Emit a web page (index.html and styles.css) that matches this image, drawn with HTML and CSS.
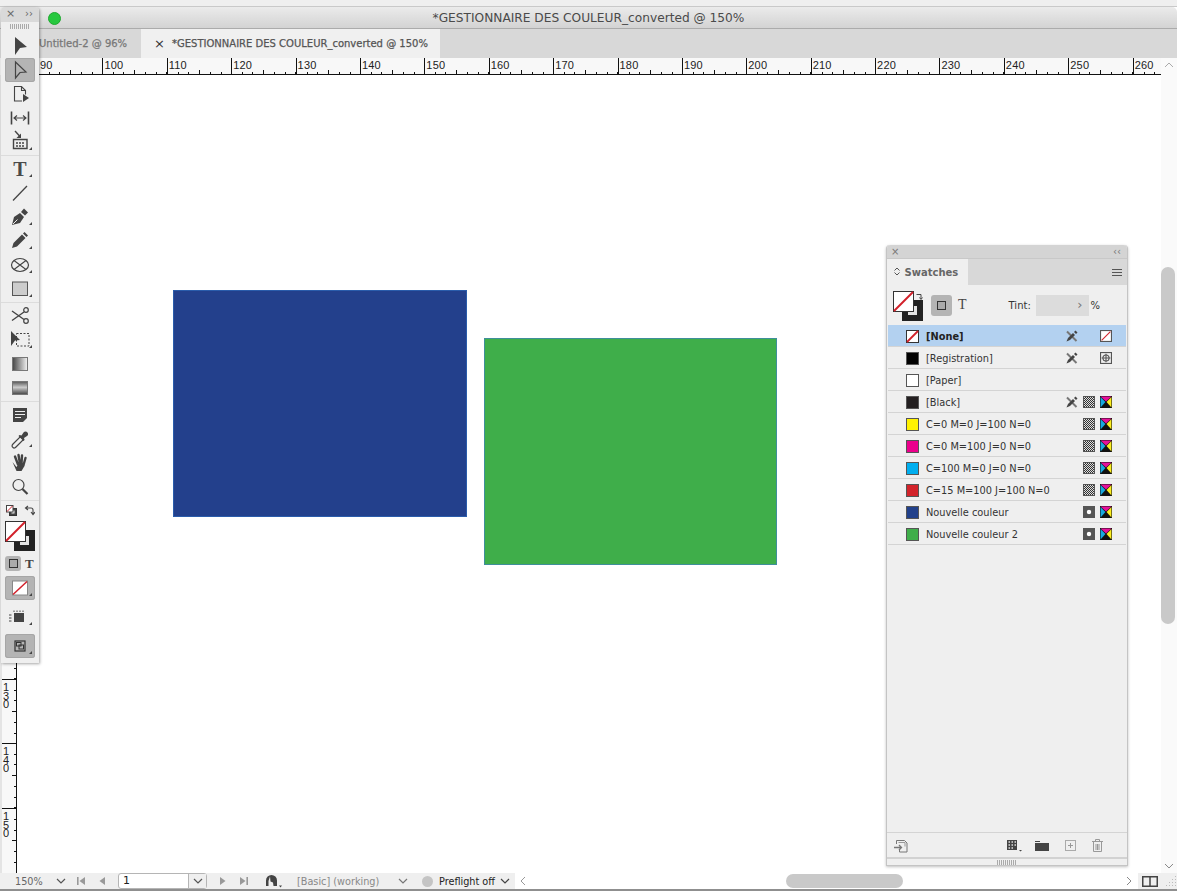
FILE: index.html
```html
<!DOCTYPE html>
<html lang="fr">
<head>
    <meta charset="UTF-8">
    <meta name="viewport" content="width=device-width, initial-scale=1.0">
    <title>GESTIONNAIRE DES COULEUR</title>
    <link rel="stylesheet" href="styles.css">
</head>
<body>
<svg class="defs" width="0" height="0">
    <defs>
        <linearGradient id="gradTool"><stop offset="0" stop-color="#444"/><stop offset="1" stop-color="#f4f4f4"/></linearGradient>
        <linearGradient id="featherTool" x2="0" y2="1"><stop offset="0" stop-color="#555"/><stop offset=".45" stop-color="#ccc"/><stop offset="1" stop-color="#444"/></linearGradient>
        <symbol id="corner" viewBox="0 0 30 24"><polygon points="27,17 27,20 24,20" fill="#444"/></symbol>
        <symbol id="cmyk" viewBox="0 0 11 11">
            <rect width="11" height="11" fill="#111"/>
            <polygon points=".5,.5 10.500,.5 5.500,5" fill="#e6109a"/>
            <polygon points=".5,1 .5,10.500 5,5.500" fill="#18a8e0"/>
            <polygon points="10.500,1 10.500,10.500 6,5.500" fill="#fdee20"/>
        </symbol>
        <symbol id="nopen" viewBox="0 0 12 12">
            <path d="M1 1.500l9.500 9.500" stroke="#777" stroke-width="2" fill="none"/>
            <path d="M.5 11.500L2 8l5-5 2 2-5 5z" fill="#444"/>
            <path d="M8 2l1.500-1.500 2 2L10 4z" fill="#444"/>
        </symbol>
        <symbol id="fillstroke" viewBox="0 0 31 30">
            <rect x="9" y="9" width="21" height="21" fill="#222"/>
            <rect x="15" y="15" width="9" height="9" fill="#e4e4e4"/>
            <rect x=".5" y=".5" width="20" height="20" fill="#fff" stroke="#333"/>
            <path d="M1 20L20 1" stroke="#d2202a" stroke-width="2"/>
        </symbol>
    </defs>
</svg>

<div class="window">
    <div class="top-strip"></div>
    <div class="titlebar">
        <span class="light"></span>
        <span class="title">*GESTIONNAIRE DES COULEUR_converted @ 150%</span>
    </div>
    <div class="tabs">
        <div class="tab first">Untitled-2 @ 96%</div>
        <div class="tab active"><span class="tab-x">×</span>*GESTIONNAIRE DES COULEUR_converted @ 150%</div>
    </div>

    <div class="workspace">
        <div class="ruler-corner"></div>
        <div class="ruler-h">
            <span>90</span><span>100</span><span>110</span><span>120</span><span>130</span><span>140</span>
            <span>150</span><span>160</span><span>170</span><span>180</span><span>190</span><span>200</span>
            <span>210</span><span>220</span><span>230</span><span>240</span><span>250</span><span>260</span>
        </div>
        <div class="scroll-v">
            <svg width="12" height="8" viewBox="0 0 12 8"><path d="M2 6l4-4 4 4" fill="none" stroke="#aaa"/></svg>
            <div class="thumb-v"></div>
            <svg width="12" height="8" viewBox="0 0 12 8"><path d="M2 2l4 4 4-4" fill="none" stroke="#888"/></svg>
        </div>
        <div class="ruler-v">
            <span><b>40</b></span><span><b>50</b></span><span><b>60</b></span><span><b>70</b></span><span><b>80</b></span>
            <span><b>90</b></span><span><b>100</b></span><span><b>110</b></span><span><b>120</b></span>
            <span><b>130</b></span><span><b>140</b></span><span><b>150</b></span>
        </div>
        <div class="canvas">
            <div class="shape blue"></div>
            <div class="shape green"></div>
        </div>
    </div>

    <div class="status">
        <span class="zoom-val">150%</span>
        <svg class="chev" width="10" height="6" viewBox="0 0 10 6"><path d="M1 1l4 4 4-4" fill="none" stroke="#555" stroke-width="1.2"/></svg>
        <svg class="nav first-nav" width="10" height="10" viewBox="0 0 10 10"><path d="M1 1h1.600v8H1zM9 1v8L3.500 5z" fill="#999"/></svg>
        <svg class="nav prev-nav" width="8" height="10" viewBox="0 0 8 10"><path d="M7 1v8L1.500 5z" fill="#999"/></svg>
        <div class="page-box"><span class="page-num">1</span><span class="page-drop"><svg width="10" height="6" viewBox="0 0 10 6"><path d="M1 1l4 4 4-4" fill="none" stroke="#555" stroke-width="1.2"/></svg></span></div>
        <svg class="nav next-nav" width="8" height="10" viewBox="0 0 8 10"><path d="M1 1v8L6.500 5z" fill="#999"/></svg>
        <svg class="nav last-nav" width="10" height="10" viewBox="0 0 10 10"><path d="M1 1v8L6.500 5zM7.400 1H9v8H7.400z" fill="#999"/></svg>
        <svg class="clock" width="17" height="14" viewBox="0 0 17 14"><path d="M1 12V6.500a5.500 5.500 0 0 1 11 0V12H8.500l-.5-3.500-2.500-1L5 2.500 3.500 7 3.500 12z" fill="#444"/><path d="M14 11.500h3L15.500 13.500z" fill="#444"/></svg>
        <span class="profile">[Basic] (working)</span>
        <svg class="chev profile-chev" width="10" height="6" viewBox="0 0 10 6"><path d="M1 1l4 4 4-4" fill="none" stroke="#777" stroke-width="1.2"/></svg>
        <span class="dot"></span>
        <span class="preflight">Preflight off</span>
        <svg class="chev preflight-chev" width="10" height="6" viewBox="0 0 10 6"><path d="M1 1l4 4 4-4" fill="none" stroke="#444" stroke-width="1.2"/></svg>
        <div class="scroll-h">
            <svg width="8" height="12" viewBox="0 0 8 12"><path d="M6 2L2 6l4 4" fill="none" stroke="#999"/></svg>
            <div class="thumb-h"></div>
            <svg class="right-arrow" width="8" height="12" viewBox="0 0 8 12"><path d="M2 2l4 4-4 4" fill="none" stroke="#888"/></svg>
        </div>
        <div class="status-end">
            <svg width="16" height="11" viewBox="0 0 16 11"><path d="M.75.75h14.500v9.500H.75zM8 .75v9.500" fill="none" stroke="#444" stroke-width="1.500"/></svg>
            <svg class="resize" width="12" height="12" viewBox="0 0 12 12"><path d="M10 1h1v1h-1zM7 4h1v1H7zM10 4h1v1h-1zM4 7h1v1H4zM7 7h1v1H7zM10 7h1v1h-1zM1 10h1v1H1zM4 10h1v1H4zM7 10h1v1H7zM10 10h1v1h-1z" fill="#bbb"/></svg>
        </div>
    </div>

    <!-- barre d'outils flottante -->
    <div class="toolbar">
        <div class="tb-head"><span>×</span><span class="tb-collapse">››</span></div>
        <div class="grip"></div>
        <div class="tool-group">
            <div class="tool"><svg viewBox="0 0 30 24"><polygon points="10,3 22,13 15,14 10,21" fill="#444"/></svg></div>
            <div class="tool on"><svg viewBox="0 0 30 24"><polygon points="10.500,4 21,14 15,14.500 10.500,20" fill="none" stroke="#444" stroke-width="1.200"/></svg></div>
            <div class="tool"><svg viewBox="0 0 30 24"><path d="M17 19H9.500V4.500h7l4 4v4M16.500 4.500v4h4" fill="none" stroke="#444" stroke-width="1.100"/><polygon points="18,12 24,16 18,20" fill="#444"/></svg></div>
            <div class="tool"><svg viewBox="0 0 30 24"><path d="M6.500 5.500v13M23.500 5.500v13" stroke="#444" stroke-width="1.600"/><path d="M9 12h12M12 9.500L9 12l3 2.500M18 9.500l3 2.500-3 2.500" fill="none" stroke="#444" stroke-width="1.100"/></svg></div>
            <div class="tool"><svg viewBox="0 0 30 24"><path d="M8.500 9.500h13.500v9H8.500z" fill="#eee" stroke="#444" stroke-width="1.400"/><path d="M11 13h2M14 13h2M17 13h2M11 16h2M14 16h2M17 16h2" stroke="#444" stroke-width="1.500"/><path d="M10 1l5 5.500" stroke="#444" stroke-width="1.400"/><polygon points="16,8 16,3.500 11.500,8" fill="#444"/><use href="#corner" width="30" height="24"/></svg></div>
        </div>
        <div class="tool-group">
            <div class="tool"><svg viewBox="0 0 30 24"><text x="15" y="19" text-anchor="middle" class="tool-t">T</text><use href="#corner" width="30" height="24"/></svg></div>
            <div class="tool"><svg viewBox="0 0 30 24"><path d="M8 19.500L22 5" stroke="#444" stroke-width="1.300"/></svg></div>
            <div class="tool"><svg viewBox="0 0 30 24"><path d="M7 20l2-8 6-4 4 4-4 6z" fill="#444"/><path d="M16 7l3-3.500 4 4-3 3z" fill="#444"/><path d="M8 19l4.500-4.500" stroke="#eee"/><use href="#corner" width="30" height="24"/></svg></div>
            <div class="tool"><svg viewBox="0 0 30 24"><path d="M7 19l1.500-5L17 5.500l3.500 3.500-8.500 8.500z" fill="#444"/><path d="M18 4.500l1.500-1.500 3.500 3.500-1.500 1.500z" fill="#444"/><use href="#corner" width="30" height="24"/></svg></div>
            <div class="tool"><svg viewBox="0 0 30 24"><ellipse cx="15" cy="12" rx="8.500" ry="6.500" fill="none" stroke="#444" stroke-width="1.200"/><path d="M9 7.500l12 9M21 7.500l-12 9" stroke="#444" stroke-width="1.100"/><use href="#corner" width="30" height="24"/></svg></div>
            <div class="tool"><svg viewBox="0 0 30 24"><rect x="7.500" y="5" width="15" height="13.500" fill="#ccc" stroke="#555"/><use href="#corner" width="30" height="24"/></svg></div>
        </div>
        <div class="tool-group">
            <div class="tool"><svg viewBox="0 0 30 24"><circle cx="21" cy="6" r="2.300" fill="none" stroke="#444" stroke-width="1.200"/><circle cx="21" cy="17" r="2.300" fill="none" stroke="#444" stroke-width="1.200"/><path d="M7 7l12 8.500M7 16.500L19 8" stroke="#444" stroke-width="1.400"/></svg></div>
            <div class="tool"><svg viewBox="0 0 30 24"><rect x="11.500" y="5.500" width="12.500" height="12.500" fill="none" stroke="#444" stroke-dasharray="2 1.500"/><polygon points="6,3 15,12 10,12.500 6,18" fill="#444"/><use href="#corner" width="30" height="24"/></svg></div>
            <div class="tool"><svg viewBox="0 0 30 24"><rect x="7.500" y="5.500" width="15" height="13" fill="url(#gradTool)" stroke="#777"/></svg></div>
            <div class="tool"><svg viewBox="0 0 30 24"><rect x="7.500" y="5.500" width="15" height="13" fill="url(#featherTool)" stroke="#777"/></svg></div>
        </div>
        <div class="tool-group">
            <div class="tool"><svg viewBox="0 0 30 24"><path d="M8 5h14v10l-4 4H8z" fill="#444"/><path d="M10 8.500h10M10 11.500h10M10 14.500h6" stroke="#eee" stroke-width="1.200"/></svg></div>
            <div class="tool"><svg viewBox="0 0 30 24"><path d="M8 20.500c-1.500-1-1-2.500 0-3.500l7.500-7.500 3 3L11 20c-1 1-2 1.500-3 .5z" fill="none" stroke="#444" stroke-width="1.200"/><path d="M14.500 8l2 .5 2-3c1-1.500 3-1.500 4 0s.5 3-.5 3.500l-3 2 .5 2-1 1-5-5z" fill="#444"/><use href="#corner" width="30" height="24"/></svg></div>
            <div class="tool"><svg viewBox="0 0 30 24"><path d="M10 5.500l3 8M13.500 4l1.500 9M17 4.500l-.5 8.500M20.500 7l-2 7" stroke="#444" stroke-width="2.400" stroke-linecap="round"/><path d="M7.500 11l4 5 2-3 5 0 1 2-3 5h-5z" fill="#444"/></svg></div>
            <div class="tool"><svg viewBox="0 0 30 24"><circle cx="13.500" cy="10" r="5.500" fill="none" stroke="#444" stroke-width="1.200"/><path d="M17.500 14l5 5" stroke="#444" stroke-width="2.200"/></svg></div>
        </div>
        <div class="color-tools">
            <div class="small-row">
                <svg width="11" height="11" viewBox="0 0 11 11"><rect x="3.500" y="3.500" width="7" height="7" fill="#444" stroke="#333"/><rect x="5.500" y="5.500" width="3" height="3" fill="#eee"/><rect x=".5" y=".5" width="6.500" height="6.500" fill="#fff" stroke="#444"/><path d="M1 6.500L6.500 1" stroke="#d2202a"/></svg>
                <svg width="11" height="11" viewBox="0 0 11 11"><path d="M4 1L1.500 3 4 5M1.500 3H7q2 0 2 2v4M7 7l2 2.500L11 7" fill="none" stroke="#444" stroke-width="1.100"/></svg>
            </div>
            <svg class="fill-stroke" viewBox="0 0 31 30"><use href="#fillstroke"/></svg>
            <div class="format-row">
                <span class="format-btn"><i></i></span>
                <span class="format-t">T</span>
            </div>
            <div class="tool on big"><svg viewBox="0 0 30 24"><rect x="7.500" y="5" width="15" height="14" fill="#fff" stroke="#888"/><path d="M8 18.500L22 5.500" stroke="#d2202a" stroke-width="1.500"/><use href="#corner" width="30" height="24"/></svg></div>
            <div class="tool big"><svg viewBox="0 0 30 24"><rect x="9" y="8" width="10" height="9" fill="#444"/><path d="M9 5.500v1.500M12 5.500v1.500M15 5.500v1.500M18 5.500v1.500M4 10h2.500M4 13h2.500M4 16h2.500" stroke="#444"/><use href="#corner" width="30" height="24"/></svg></div>
            <div class="tool on big last"><svg viewBox="0 0 30 24"><rect x="10" y="7" width="10" height="10" fill="none" stroke="#333" stroke-width="1.200"/><rect x="11.500" y="8.500" width="4.500" height="3.500" fill="none" stroke="#333"/><rect x="14" y="11" width="4.500" height="4" fill="none" stroke="#333"/><use href="#corner" width="30" height="24"/></svg></div>
        </div>
    </div>

    <!-- panneau nuancier -->
    <div class="panel">
        <div class="panel-head"><span>×</span><span class="panel-collapse">‹‹</span></div>
        <div class="panel-tabs">
            <div class="panel-tab">
                <svg class="updown" width="6" height="9" viewBox="0 0 6 9"><path d="M.5 3.500L3 1l2.500 2.500M.5 5.500L3 8l2.500-2.500" fill="none" stroke="#555"/></svg>
                Swatches
            </div>
            <div class="panel-menu"><i></i><i></i><i></i></div>
        </div>
        <div class="panel-controls">
            <svg class="fill-stroke small" viewBox="0 0 31 30"><use href="#fillstroke"/></svg>
            <svg class="swap" width="8" height="9" viewBox="0 0 8 9"><path d="M.5 1.500h4.500V6M3.500 4.500L5 6.500l1.500-2" fill="none" stroke="#444"/></svg>
            <span class="format-btn large"><i></i></span>
            <span class="format-t">T</span>
            <span class="tint">Tint:</span>
            <span class="tint-box">›</span>
            <span class="percent">%</span>
        </div>
        <div class="swatch-list">
            <div class="row selected">
                <svg class="chip" viewBox="0 0 13 13"><rect x=".5" y=".5" width="12" height="12" fill="#fff" stroke="#333"/><path d="M1 12L12 1" stroke="#d2202a" stroke-width="1.800"/></svg>
                <span class="name">[None]</span>
                <svg class="ico skip"><use href="#nopen"/></svg>
                <svg class="ico mode" viewBox="0 0 11 11"><rect x=".5" y=".5" width="10" height="10" fill="#fff" stroke="#555"/><path d="M1.500 9.500l8-8" stroke="#d2202a"/></svg>
            </div>
            <div class="row">
                <span class="chip" style="background: #000"></span>
                <span class="name">[Registration]</span>
                <svg class="ico skip"><use href="#nopen"/></svg>
                <svg class="ico" viewBox="0 0 11 11"><rect x=".5" y=".5" width="10" height="10" fill="#eee" stroke="#555"/><circle cx="5.500" cy="5.500" r="2.800" fill="none" stroke="#555"/><path d="M5.500 1.500v8M1.500 5.500h8" stroke="#555"/></svg>
            </div>
            <div class="row">
                <span class="chip" style="background: #fff"></span>
                <span class="name">[Paper]</span>
            </div>
            <div class="row">
                <span class="chip" style="background: #231f20"></span>
                <span class="name">[Black]</span>
                <svg class="ico"><use href="#nopen"/></svg>
                <span class="ico process"></span>
                <svg class="ico"><use href="#cmyk"/></svg>
            </div>
            <div class="row">
                <span class="chip" style="background: #fff200"></span>
                <span class="name">C=0 M=0 J=100 N=0</span>
                <span class="ico process"></span>
                <svg class="ico"><use href="#cmyk"/></svg>
            </div>
            <div class="row">
                <span class="chip" style="background: #ec008c"></span>
                <span class="name">C=0 M=100 J=0 N=0</span>
                <span class="ico process"></span>
                <svg class="ico"><use href="#cmyk"/></svg>
            </div>
            <div class="row">
                <span class="chip" style="background: #00aeef"></span>
                <span class="name">C=100 M=0 J=0 N=0</span>
                <span class="ico process"></span>
                <svg class="ico"><use href="#cmyk"/></svg>
            </div>
            <div class="row">
                <span class="chip" style="background: #d2232a"></span>
                <span class="name">C=15 M=100 J=100 N=0</span>
                <span class="ico process"></span>
                <svg class="ico"><use href="#cmyk"/></svg>
            </div>
            <div class="row">
                <span class="chip" style="background: #22418b"></span>
                <span class="name">Nouvelle couleur</span>
                <span class="ico spot"></span>
                <svg class="ico"><use href="#cmyk"/></svg>
            </div>
            <div class="row">
                <span class="chip" style="background: #3fae4a"></span>
                <span class="name">Nouvelle couleur 2</span>
                <span class="ico spot"></span>
                <svg class="ico"><use href="#cmyk"/></svg>
            </div>
        </div>
        <div class="panel-foot">
            <svg class="foot-import" width="14" height="14" viewBox="0 0 14 14"><path d="M2.500 5V1.500h8l2.500 2.500v9H5.500v-2" fill="none" stroke="#777"/><path d="M0 8.500h7M5 6l2.500 2.500L5 11" fill="none" stroke="#777" stroke-width="1.300"/><path d="M4.500 3.500h6.500v4" fill="none" stroke="#999"/></svg>
            <svg class="foot-grid" width="15" height="12" viewBox="0 0 15 12"><rect width="10" height="10" fill="#444"/><path d="M1.500 2h1.500M4.500 2H6M7.500 2H9M1.500 5H3M4.500 5H6M7.500 5H9M1.500 8H3M4.500 8H6" stroke="#ddd" stroke-width="1.300"/><path d="M12 10h3l-1.500 1.500z" fill="#444"/></svg>
            <svg class="foot-folder" width="14" height="10" viewBox="0 0 14 10"><path d="M0 2h14v8H0zM0 0h5v1H0z" fill="#444"/></svg>
            <svg class="foot-new" width="11" height="11" viewBox="0 0 11 11"><rect x=".5" y=".5" width="10" height="10" fill="none" stroke="#aaa"/><path d="M5.500 3v5M3 5.500h5" stroke="#999"/></svg>
            <svg class="foot-trash" width="11" height="13" viewBox="0 0 11 13"><path d="M1.500 3v9.500h8V3M0 2.500h11M3.500 2V.5h4V2M4 5v6M5.500 5v6M7 5v6" fill="none" stroke="#999"/></svg>
        </div>
        <div class="panel-grip"><div class="grip"></div></div>
    </div>
</div>
</body>
</html>
```

FILE: styles.css
```css
body {
    margin: 0;
    font-family: "DejaVu Sans", sans-serif;
    background-color: #fff;
    overflow: hidden;
}
.defs {
    position: absolute;
}
.window {
    position: relative;
    width: 1177px;
    height: 891px;
    display: flex;
    flex-direction: column;
    overflow: hidden;
}
.top-strip {
    height: 6px;
    background-color: #efefef;
    border-bottom: 1px solid #c9c9c9;
}
.titlebar {
    height: 21px;
    display: flex;
    align-items: center;
    justify-content: center;
    position: relative;
    background: linear-gradient(#ebebeb, #d3d3d3);
    border-bottom: 1px solid #ababab;
    border-top-right-radius: 5px;
}
.light {
    position: absolute;
    left: 48px;
    top: 5px;
    width: 11px;
    height: 11px;
    border-radius: 50%;
    background-color: #27c83f;
    border: .5px solid #1fa92f;
}
.title {
    font-size: 12.2px;
    color: #4a4a4a;
}
.tabs {
    height: 29px;
    display: flex;
    background-color: #d8d8d8;
    font-size: 10px;
    color: #555;
    white-space: nowrap;
}
.tab {
    display: flex;
    align-items: center;
}
.tab.first {
    width: 141px;
    padding-left: 39px;
    box-sizing: border-box;
    color: #777;
    -webkit-text-stroke: .25px #777;
}
.tab.active {
    width: 299px;
    background-color: #f0f0f0;
    color: #555;
    -webkit-text-stroke: .25px #555;
    box-sizing: border-box;
    padding-left: 13px;
}
.tab-x {
    width: 18px;
    font-size: 13px;
    color: #333;
    -webkit-text-stroke: 0;
}
.workspace {
    flex: 1;
    min-height: 0;
    display: grid;
    grid-template-columns: 17px 1fr 16px;
    grid-template-rows: 17px 1fr;
}
.ruler-corner {
    background-color: #f2f2f2;
}
.ruler-h {
    display: flex;
    overflow: hidden;
    background-color: #f8f8f8;
    border-bottom: 1px solid #111;
    padding-left: 21px;
}
.ruler-h span {
    flex: 0 0 64.4px;
    box-sizing: border-box;
    padding: 1px 0 0 2px;
    font-family: "Liberation Sans", sans-serif;
    font-size: 11px;
    line-height: 13px;
    letter-spacing: .2px;
    color: #222;
    background:
        linear-gradient(#111, #111) left top / 1px 100% no-repeat,
        linear-gradient(#111, #111) 32px bottom / 1px 4px no-repeat,
        repeating-linear-gradient(90deg, #111 0 1px, transparent 1px 10.73px) left bottom / 100% 2px no-repeat;
}
.scroll-v {
    grid-row: 1 / 3;
    grid-column: 3;
    background-color: #fafafa;
    display: flex;
    flex-direction: column;
    align-items: center;
    padding-top: 3px;
    padding-bottom: 3px;
}
.thumb-v {
    width: 14px;
    height: 358px;
    margin: 198px 2px 238px 0;
    border-radius: 7px;
    background-color: #c9c9c9;
}
.ruler-v {
    display: flex;
    flex-direction: column;
    overflow: hidden;
    padding-top: 23px;
    background-color: #f8f8f8;
    border-right: 1px solid #111;
    border-left: 2px solid #e4e4e4;
    box-sizing: border-box;
    width: 17px;
}
.ruler-v span {
    flex: 0 0 64.5px;
    box-sizing: border-box;
    padding: 2px 0 0 0;
    background:
        linear-gradient(#111, #111) left top / 100% 1px no-repeat,
        linear-gradient(#111, #111) right 32px / 4px 1px no-repeat,
        repeating-linear-gradient(180deg, #111 0 1px, transparent 1px 10.75px) right top / 2px 100% no-repeat;
}
.ruler-v b {
    display: block;
    width: 9px;
    font-family: "Liberation Sans", sans-serif;
    font-weight: normal;
    font-size: 11px;
    line-height: 10px;
    writing-mode: vertical-rl;
    text-orientation: upright;
    letter-spacing: -3.500px;
    color: #222;
}
.canvas {
    position: relative;
    background-color: #fff;
}
.shape {
    position: absolute;
    box-sizing: border-box;
    height: 227px;
}
.shape.blue {
    left: 156px;
    top: 215px;
    width: 294px;
    background-color: #23408c;
    border: 1px solid #2a5cab;
}
.shape.green {
    left: 467px;
    top: 263px;
    width: 293px;
    background-color: #3fae4a;
    border: 1px solid #3f8f9a;
}

/* barre du bas */
.status {
    height: 18px;
    display: flex;
    align-items: center;
    background-color: #efefef;
    border-bottom: 2px solid #8f8f8f;
    box-sizing: border-box;
    font-size: 9.7px;
    color: #666;
    white-space: nowrap;
}
.zoom-val {
    margin-left: 15px;
    width: 41px;
}
.first-nav {
    margin-left: 10px;
}
.prev-nav {
    margin-left: 12px;
}
.page-box {
    margin-left: 12px;
    width: 89px;
    height: 16px;
    display: flex;
    box-sizing: border-box;
    border: 1px solid #b5b5b5;
    border-radius: 3px;
    background-color: #fff;
    color: #222;
}
.page-num {
    flex: 1;
    padding-left: 4px;
    line-height: 14px;
    font-size: 11px;
}
.page-drop {
    width: 17px;
    display: flex;
    align-items: center;
    justify-content: center;
    border-left: 1px solid #b5b5b5;
    background-color: #efefef;
}
.next-nav {
    margin-left: 12px;
}
.last-nav {
    margin-left: 12px;
}
.clock {
    margin-left: 16px;
}
.profile {
    margin-left: 15px;
    width: 101px;
    color: #888;
}
.dot {
    margin-left: 14px;
    width: 11px;
    height: 11px;
    border-radius: 50%;
    background-color: #c4c4c4;
}
.preflight {
    margin-left: 6px;
    width: 61px;
    color: #222;
}
.scroll-h {
    flex: 1;
    margin-left: 5px;
    height: 16px;
    display: flex;
    align-items: center;
    background-color: #fff;
    padding-left: 4px;
}
.thumb-h {
    margin-left: 259px;
    width: 117px;
    height: 14px;
    border-radius: 7px;
    background-color: #c9c9c9;
}
.right-arrow {
    margin-left: 222px;
}
.status-end {
    width: 39px;
    padding-left: 4px;
    box-sizing: border-box;
    display: flex;
    align-items: center;
}
.resize {
    margin-left: 7px;
    margin-right: -4px;
}

/* outils */
.toolbar {
    position: absolute;
    left: 1px;
    top: 7px;
    width: 38px;
    height: 656px;
    background-color: #efefef;
    border-radius: 4px 4px 0 0;
    box-shadow: 1px 1px 3px rgba(0, 0, 0, .35);
}
.tb-head {
    height: 15px;
    display: flex;
    justify-content: space-between;
    padding: 0 6px 0 5px;
    background-color: #d9d9d9;
    border-radius: 4px 4px 0 0;
    font-size: 11px;
    line-height: 14px;
    color: #666;
}
.tb-collapse {
    font-size: 10px;
}
.grip {
    width: 20px;
    height: 5px;
    margin: 2px auto 0;
    background: repeating-linear-gradient(90deg, #aaa 0 1px, transparent 1px 2px);
}
.toolbar > .grip {
    margin-bottom: 5px;
}
.tool-group {
    padding-bottom: 1px;
    border-bottom: 1px solid #dcdcdc;
    margin-bottom: 1px;
}
.tool {
    width: 30px;
    height: 24px;
    margin-left: 4px;
    border-radius: 3px;
    box-sizing: border-box;
}
.tool svg {
    display: block;
    width: 30px;
    height: 24px;
}
.tool.on {
    background-color: #b4b4b4;
    box-shadow: inset 0 0 0 1px #a6a6a6;
}
.tool-t {
    font-family: "Liberation Serif", serif;
    font-weight: bold;
    font-size: 20px;
    fill: #4a4a4a;
}
.color-tools {
    display: flex;
    flex-direction: column;
}
.small-row {
    height: 14px;
    display: flex;
    justify-content: space-between;
    padding: 3px 4px 0 5px;
    box-sizing: border-box;
    margin-bottom: 5px;
}
.small-row svg {
    display: block;
}
.fill-stroke {
    width: 31px;
    height: 30px;
    margin-left: 4px;
    display: block;
}
.format-row {
    margin: 5px 0 5px 4px;
    display: flex;
    align-items: center;
    height: 15px;
}
.format-btn {
    width: 16px;
    height: 15px;
    border-radius: 3px;
    background-color: #b4b4b4;
    display: flex;
    align-items: center;
    justify-content: center;
}
.format-btn i {
    width: 7px;
    height: 7px;
    background-color: #aaa;
    border: 1px solid #333;
}
.format-btn.large {
    width: 21px;
    height: 21px;
}
.format-t {
    font-family: "Liberation Serif", serif;
    font-weight: bold;
    font-size: 13px;
    color: #444;
    margin-left: 4px;
}
.panel-controls .format-t {
    margin-left: 6px;
    font-size: 14px;
    font-weight: normal;
}
.big {
    margin-bottom: 5px;
}
.big.last {
    margin-bottom: 0;
}

/* nuancier */
.panel {
    position: absolute;
    left: 886px;
    top: 245px;
    width: 242px;
    height: 621px;
    box-sizing: border-box;
    display: flex;
    flex-direction: column;
    background-color: #efefef;
    border: 1px solid #c4c4c4;
    border-top: none;
    border-radius: 4px 4px 0 0;
    box-shadow: 0 1px 3px rgba(0, 0, 0, .25);
    color: #333;
}
.panel-head {
    height: 13px;
    display: flex;
    justify-content: space-between;
    padding: 0 6px 0 4px;
    background-color: #d4d4d4;
    border-radius: 4px 4px 0 0;
    font-size: 10px;
    line-height: 13px;
    color: #777;
}
.panel-tabs {
    height: 27px;
    display: flex;
    background-color: #d8d8d8;
    border-top: 1px solid #c8c8c8;
    box-sizing: border-box;
}
.panel-tab {
    width: 81px;
    padding-left: 7px;
    box-sizing: border-box;
    background-color: #efefef;
    font-size: 10px;
    font-weight: bold;
    line-height: 27px;
    color: #666;
}
.updown {
    margin-right: 1px;
}
.panel-menu {
    margin-left: auto;
    margin-right: 5px;
    width: 10px;
    display: flex;
    flex-direction: column;
    justify-content: center;
    gap: 2px;
}
.panel-menu i {
    height: 1px;
    background-color: #555;
}
.panel-controls {
    height: 40px;
    display: flex;
    align-items: center;
    position: relative;
    font-size: 10px;
}
.fill-stroke.small {
    margin-left: 6px;
    margin-top: 1px;
}
.swap {
    position: absolute;
    left: 29px;
    top: 8px;
}
.panel-controls .format-btn {
    margin-left: 7px;
}
.tint {
    margin-left: 42px;
    width: 27px;
    color: #333;
}
.tint-box {
    width: 53px;
    height: 21px;
    box-sizing: border-box;
    background-color: #dcdcdc;
    padding-right: 6px;
    text-align: right;
    font-size: 13px;
    line-height: 19px;
    color: #777;
}
.percent {
    margin-left: 2px;
}
.swatch-list {
    flex: 1;
    padding: 0 1px;
}
.row {
    height: 22px;
    display: flex;
    align-items: center;
    gap: 5px;
    box-sizing: border-box;
    border-bottom: 1px solid #d4d4d4;
    padding: 1px 14px 0 18px;
    font-size: 9.8px;
    color: #333;
}
.row.selected {
    background-color: #b3d1f0;
    font-weight: bold;
    color: #222;
}
.chip {
    width: 13px;
    height: 13px;
    box-sizing: border-box;
    border: 1px solid #555;
    margin-right: 2px;
    flex: none;
}
svg.chip {
    border: none;
}
.name {
    flex: 1;
    white-space: nowrap;
}
.ico {
    width: 12px;
    height: 12px;
    flex: none;
}
.ico.skip {
    margin-right: 17px;
}
.process {
    box-sizing: border-box;
    border: 1px solid #555;
    background: repeating-conic-gradient(#333 0 25%, #ddd 0 50%) 0 0 / 2px 2px;
}
.spot {
    background: radial-gradient(circle at center, #fff 0 1.800px, #555 2.600px);
}
.panel-foot {
    height: 25px;
    display: flex;
    align-items: center;
    padding-top: 1px;
    border-top: 1px solid #d4d4d4;
    box-sizing: border-box;
}
.foot-import {
    margin-left: 7px;
}
.foot-grid {
    margin-left: 99px;
}
.foot-folder {
    margin-left: 13px;
}
.foot-new {
    margin-left: 16px;
}
.foot-trash {
    margin-left: 16px;
}
.panel-grip {
    height: 8px;
    border-top: 2px solid #d2d2d2;
    box-sizing: border-box;
}
.panel-grip .grip {
    margin-top: 1px;
}
```
